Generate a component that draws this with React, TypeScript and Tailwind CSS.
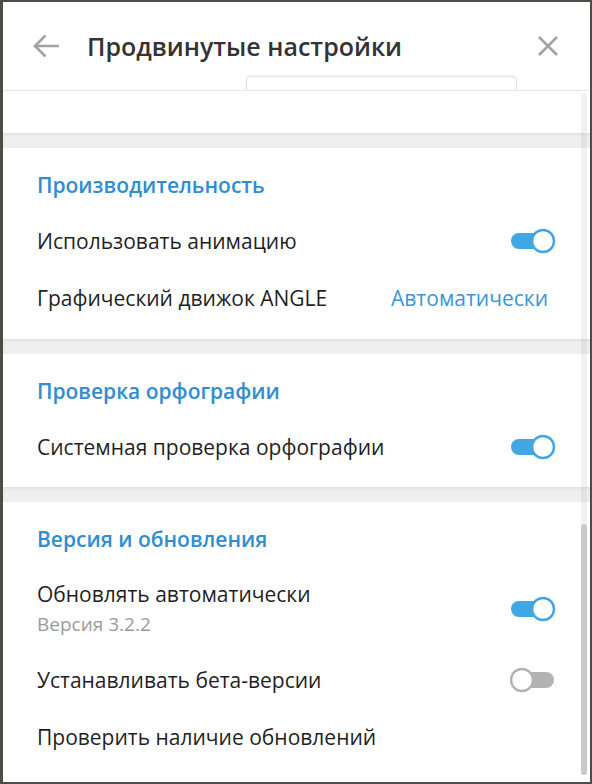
import React from "react";

const font = { fontFamily: '"Open Sans", "Noto Sans", sans-serif' };

function Toggle({ on }: { on: boolean }) {
  if (on) {
    return (
      <svg width="46" height="26" viewBox="0 0 46 26" className="shrink-0">
        <rect x="1" y="5" width="36" height="16" rx="8" fill="#40a7e3" />
        <circle cx="33" cy="13" r="11" fill="#fff" stroke="#40a7e3" strokeWidth="2.5" />
      </svg>
    );
  }
  return (
    <svg width="46" height="26" viewBox="0 0 46 26" className="shrink-0">
      <rect x="8" y="5" width="36" height="16" rx="8" fill="#b3b3b3" />
      <circle cx="12" cy="13" r="11" fill="#fff" stroke="#b3b3b3" strokeWidth="2.5" />
    </svg>
  );
}

function SectionTitle({ children }: { children: React.ReactNode }) {
  return (
    <div className="pt-[24px] text-[21px] leading-[26px] font-semibold text-[#2f8dd0]">
      {children}
    </div>
  );
}

function Row({ label, right }: { label: string; right?: React.ReactNode }) {
  return (
    <div className="flex h-[57px] items-center justify-between">
      <span className="text-[21px] leading-[26px] text-[#1f1f1f]">{label}</span>
      {right}
    </div>
  );
}

function Gap() {
  return <div className="h-[15px] bg-[#efefef] shadow-[inset_0_2px_3px_rgba(0,0,0,0.05)]" />;
}

export default function App() {
  return (
    <div className="h-[784px] w-[592px] overflow-hidden bg-[#4a4e44] pt-[2px] pl-[3px] pr-[2px] pb-[2px]" style={font}>
      <div className="flex h-[780px] flex-col bg-white">
        {/* header */}
        <div className="relative flex h-[88px] shrink-0 items-center">
          <svg width="28" height="26" viewBox="0 0 28 26" className="ml-[29px]">
            <path d="M3 13 H27 M13.5 2.5 L3 13 L13.5 23.5" fill="none" stroke="#a3a3a3" strokeWidth="2.6" />
          </svg>
          <span className="ml-[27px] text-[25px] leading-[32px] font-semibold text-[#333]">
            Продвинутые настройки
          </span>
          <svg width="22" height="22" viewBox="0 0 22 22" className="ml-auto mr-[31px]">
            <path d="M2 2 L20 20 M20 2 L2 20" fill="none" stroke="#a3a3a3" strokeWidth="2.6" />
          </svg>
          <div className="absolute bottom-0 left-[243px] h-[14px] w-[271px] rounded-t-[5px] border border-b-0 border-[#e2e2e2] bg-white shadow-[0_-1px_3px_rgba(0,0,0,0.06)]" />
        </div>
        <div className="h-px shrink-0 bg-[#e6e6e6]" />

        {/* content */}
        <div className="relative flex-1">
          <div className="h-[42px] bg-white" />
          <Gap />
          <div className="h-[191px] px-[34px]">
            <SectionTitle>Производительность</SectionTitle>
            <div className="mt-[14px]">
              <Row label="Использовать анимацию" right={<Toggle on />} />
              <Row
                label="Графический движок ANGLE"
                right={<span className="mr-[8px] text-[21px] leading-[26px] text-[#3a96d6]">Автоматически</span>}
              />
            </div>
          </div>
          <Gap />
          <div className="h-[133px] px-[34px]">
            <SectionTitle>Проверка орфографии</SectionTitle>
            <div className="mt-[14px]">
              <Row label="Системная проверка орфографии" right={<Toggle on />} />
            </div>
          </div>
          <Gap />
          <div className="px-[34px]">
            <SectionTitle>Версия и обновления</SectionTitle>
            <div className="mt-[14px]">
              <div className="flex h-[85px] items-center justify-between">
                <div className="flex flex-col gap-[5px]">
                  <span className="text-[21px] leading-[26px] text-[#1f1f1f]">Обновлять автоматически</span>
                  <span className="text-[19px] leading-[24px] text-[#9a9a9a]">Версия 3.2.2</span>
                </div>
                <Toggle on />
              </div>
              <Row label="Устанавливать бета-версии" right={<Toggle on={false} />} />
              <Row label="Проверить наличие обновлений" />
            </div>
          </div>

          {/* scrollbar */}
          <div className="absolute top-[2px] bottom-[7px] left-[578px] w-[6px] rounded-full bg-black/[0.05]">
            <div className="absolute right-0 bottom-0 left-0 h-[251px] rounded-full bg-[#c9c9c9]" />
          </div>
        </div>
      </div>
    </div>
  );
}
